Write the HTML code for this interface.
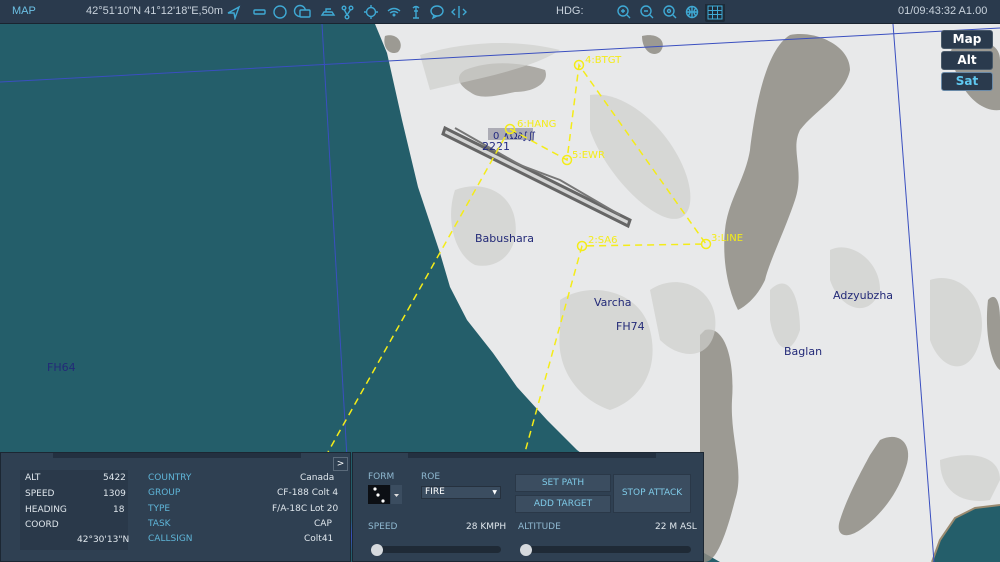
<!DOCTYPE html>
<html><head><meta charset="utf-8"><style>
*{margin:0;padding:0;box-sizing:border-box}
body{width:1000px;height:562px;overflow:hidden;background:#245e6a;font-family:"DejaVu Sans","Liberation Sans",sans-serif;position:relative}
#top{position:absolute;left:0;top:0;width:1000px;height:24px;background:#2a3a4d;border-bottom:1px solid #1a2430;color:#c8d2dc;font-size:11px;font-family:"Liberation Sans",sans-serif}
#top span{position:absolute;top:5px;white-space:nowrap}
.ic{position:absolute;top:4px}
#map{position:absolute;left:0;top:24px}
.mb{position:absolute;left:941px;width:52px;height:19px;background:#2a3a4d;border:1px solid #4a5a6a;border-radius:3px;color:#fff;font-weight:bold;font-size:12px;text-align:center;line-height:17px}
.panel{position:absolute;top:452px;height:110px;background:#2f4052;border:1px solid #1c2733}
.lbl{position:absolute;font-size:9px;color:#5fb5d8}
.w{position:absolute;font-size:9px;color:#dfe6ec}
.btn{position:absolute;background:#3b4d60;color:#7fcbe8;font-size:9px;text-align:center;border:1px solid #2a3848}
</style></head><body>
<svg id="map" width="1000" height="538" viewBox="0 24 1000 538">
<rect x="0" y="24" width="1000" height="538" fill="#245e6a"/>
<path d="M375,24 L1000,24 L1000,505 L975,508 L955,518 L940,540 L932,562 L720,562 L690,545 L650,510 L610,475 L577,450 L547,420 L517,387 L493,353 L467,320 L450,287 L440,253 L418,187 L402,120 L387,53 Z" fill="#e8e9ea"/>
<path d="M932,562 L940,540 L955,518 L975,508 L1000,505" fill="none" stroke="#9a8a70" stroke-width="2"/>
<g fill="#8e8c84" opacity="0.85">
<path d="M790,35 C815,30 850,45 850,70 C845,95 815,110 800,130 C790,150 805,170 795,200 C785,230 770,260 765,280 C758,295 748,305 738,310 C728,290 722,260 725,230 C728,200 745,180 750,150 C755,110 765,50 790,35 Z"/>
<path d="M705,330 C725,325 735,360 732,400 C730,440 745,470 735,500 C725,540 715,562 705,562 L700,562 L700,335 Z"/>
<path d="M880,440 C900,430 915,445 905,470 C895,500 875,520 860,530 C845,540 835,535 840,520 C848,495 862,470 870,455 Z"/>
<path d="M955,45 C975,38 1000,40 1000,60 L1000,110 C985,112 970,100 962,85 C955,70 945,52 955,45 Z"/>
<path d="M988,300 C995,292 1000,300 1000,320 L1000,370 C992,365 984,335 988,300 Z"/>
<path d="M465,70 C490,60 520,62 545,70 C550,82 535,92 515,92 C495,96 480,100 470,92 C458,85 455,76 465,70 Z" opacity="0.8"/>
<path d="M385,36 C398,32 405,45 398,52 C390,56 382,48 385,36 Z"/>
<path d="M642,36 C658,32 668,42 660,52 C652,58 642,50 642,36 Z"/>
</g>
<g fill="#cfcfcc" opacity="0.7">
<path d="M590,95 C620,90 660,120 680,160 C700,200 690,230 660,215 C630,200 600,160 590,130 Z"/>
<path d="M455,190 C480,180 510,190 515,220 C520,250 500,270 475,265 C455,255 445,220 455,190 Z"/>
<path d="M560,300 C590,280 640,290 650,330 C660,370 640,400 610,410 C580,400 555,370 560,330 Z"/>
<path d="M650,290 C680,270 720,290 715,330 C710,360 680,360 660,340 Z"/>
<path d="M770,290 C790,270 800,300 800,330 C790,360 775,350 770,320 Z"/>
<path d="M830,250 C850,240 880,260 880,290 C870,320 840,310 830,280 Z"/>
<path d="M930,280 C960,270 990,300 980,340 C970,380 940,370 930,340 Z"/>
<path d="M940,460 C970,450 1000,455 1000,480 L990,500 C960,505 940,490 940,460 Z"/>
<path d="M420,55 C470,40 520,40 560,50 C530,70 470,80 430,90 Z"/>
</g>
<path d="M445,128 L630,220 L628,226 L443,134 Z" fill="#d5d6d6" stroke="#666" stroke-width="3"/>
<path d="M455,128 L520,165 L560,180 L620,215" stroke="#777" stroke-width="2" fill="none"/>
<rect x="488" y="128" width="45" height="12" fill="#707080" opacity="0.5"/>
<text x="493" y="139" font-size="10" fill="#222a80" font-family="DejaVu Sans">0 ∧Ω∂∫∬</text>
<text x="482" y="150" font-size="11" fill="#222a80" font-family="DejaVu Sans">2221</text>
<line x1="0" y1="82" x2="1000" y2="28" stroke="#3a4fc0" stroke-width="1"/>
<line x1="322" y1="24" x2="353" y2="562" stroke="#3a4fc0" stroke-width="1"/>
<line x1="893" y1="24" x2="934" y2="562" stroke="#3a4fc0" stroke-width="1"/>
<g stroke="#f4ec18" stroke-width="1.5" fill="none" stroke-dasharray="7,5">
<path d="M510,129 L567,160 L579,65 L706,244 L582,246 L525,452"/>
<path d="M505,137 L328,452"/>
</g>
<g stroke="#f4ec18" stroke-width="1.5" fill="none">
<circle cx="510" cy="129" r="4.5"/><circle cx="567" cy="160" r="4.5"/><circle cx="579" cy="65" r="4.5"/><circle cx="706" cy="244" r="4.5"/><circle cx="582" cy="246" r="4.5"/>
</g>
<g fill="#f4ec18" font-size="10" font-family="DejaVu Sans">
<text x="517" y="127">6:HANG</text><text x="572" y="158">5:EWR</text><text x="585" y="63">4:BTGT</text><text x="711" y="241">3:LINE</text><text x="588" y="243">2:SA6</text>
</g>
<g fill="#232a78" font-size="11" font-family="DejaVu Sans">
<text x="475" y="242">Babushara</text><text x="594" y="306">Varcha</text><text x="616" y="330">FH74</text><text x="833" y="299">Adzyubzha</text><text x="784" y="355">Baglan</text><text x="47" y="371">FH64</text>
</g>
</svg>
<div id="top">
<span style="left:12px;color:#6cc0e4">MAP</span>
<span style="left:86px">42°51'10"N 41°12'18"E,50m</span>
<svg class="ic" style="left:226px" width="250" height="16" fill="none" stroke="#3fa9d4" stroke-width="1.4">
<path d="M2,9 L13,3 L9,14 L8,9 Z"/>
<rect x="28" y="6" width="11" height="4" rx="1"/>
<circle cx="54" cy="8" r="6"/>
<circle cx="74" cy="7" r="5.5"/><rect x="74" y="6" width="10" height="7" rx="1" fill="#2a3a4d"/>
<path d="M96,11 L108,11 L106,8 L98,8 Z M100,8 L100,5 L105,5"/>
<circle cx="118" cy="4" r="1.8"/><circle cx="125" cy="4" r="1.8"/><circle cx="121" cy="13" r="1.8"/><path d="M118,5 L121,11 M125,5 L121,11"/>
<circle cx="145" cy="8" r="4.5"/><path d="M145,1 V4 M145,12 V15 M138,8 H141 M149,8 H152"/>
<path d="M162,7 Q168,2 174,7 M164,9 Q168,6 172,9"/><circle cx="168" cy="11" r="0.8"/>
<path d="M190,3 V14 M187,14 H193 M187,4 Q190,1 193,4 M188,7 H192"/>
<ellipse cx="211" cy="7" rx="6" ry="5"/><path d="M208,11 L207,14 L211,12"/>
<path d="M233,2 V14 M229,5 L226,8 L229,11 M237,5 L240,8 L237,11"/>
</svg>
<span style="left:556px">HDG:</span>
<svg class="ic" style="left:616px" width="110" height="18" fill="none" stroke="#3fa9d4" stroke-width="1.4">
<circle cx="7" cy="7" r="5"/><path d="M11,11 L14,14 M5,7 H9 M7,5 V9"/>
<circle cx="30" cy="7" r="5"/><path d="M34,11 L37,14 M28,7 H32"/>
<circle cx="53" cy="7" r="5"/><path d="M57,11 L60,14"/><circle cx="53" cy="7" r="1.5"/>
<circle cx="76" cy="8" r="5.5"/><path d="M70.5,8 H81.5 M76,2.5 V13.5 M72,4 Q76,8 72,12 M80,4 Q76,8 80,12"/>
<rect x="89" y="-1" width="20" height="19" rx="2" fill="#1e2b38" stroke="none"/>
<path d="M92,2 H106 V15 H92 Z M96.5,2 V15 M101.5,2 V15 M92,6.5 H106 M92,10.5 H106" stroke-width="1"/>
</svg>
<span style="left:898px">01/09:43:32 A1.00</span>
</div>
<div class="mb" style="top:30px">Map</div>
<div class="mb" style="top:51px">Alt</div>
<div class="mb" style="top:72px;color:#5fc8f0;border-color:#6a8aa8">Sat</div>

<div class="panel" style="left:0;width:351px">
<div style="position:absolute;left:52px;top:0;width:248px;height:5px;background:#233040"></div>
<div style="position:absolute;left:332px;top:4px;width:15px;height:14px;border:1px solid #5a6a7a;color:#fff;font-size:9px;text-align:center;line-height:12px">&gt;</div>
<div style="position:absolute;left:19px;top:17px;width:108px;height:80px;background:#2a394a"></div>
<div class="w" style="left:24px;top:20px">ALT</div><div class="w" style="left:102px;top:20px">5422</div>
<div class="w" style="left:24px;top:36px">SPEED</div><div class="w" style="left:102px;top:36px">1309</div>
<div class="w" style="left:24px;top:52px">HEADING</div><div class="w" style="left:112px;top:52px">18</div>
<div class="w" style="left:24px;top:67px">COORD</div>
<div class="w" style="left:76px;top:82px">42°30'13"N</div>
<div class="lbl" style="left:147px;top:20px">COUNTRY</div><div class="w" style="left:299px;top:20px">Canada</div>
<div class="lbl" style="left:147px;top:35px">GROUP</div><div class="w" style="left:276px;top:35px">CF-188 Colt 4</div>
<div class="lbl" style="left:147px;top:51px">TYPE</div><div class="w" style="left:271px;top:51px">F/A-18C Lot 20</div>
<div class="lbl" style="left:147px;top:66px">TASK</div><div class="w" style="left:313px;top:66px">CAP</div>
<div class="lbl" style="left:147px;top:81px">CALLSIGN</div><div class="w" style="left:303px;top:81px">Colt41</div>
</div>

<div class="panel" style="left:352px;width:352px">
<div style="position:absolute;left:55px;top:0;width:248px;height:5px;background:#233040"></div>
<div class="lbl" style="left:15px;top:19px;color:#8fb8d0">FORM</div>
<div class="lbl" style="left:68px;top:19px;color:#8fb8d0">ROE</div>
<div style="position:absolute;left:15px;top:32px;width:22px;height:19px;background:#0c0f14"></div>
<svg style="position:absolute;left:15px;top:32px" width="35" height="20"><circle cx="7" cy="4" r="1.6" fill="#fff"/><circle cx="10" cy="10" r="1.6" fill="#fff"/><circle cx="15" cy="16" r="1.6" fill="#fff"/><rect x="23" y="0" width="11" height="19" fill="#3b4d60"/><path d="M26,9 L31,9 L28.5,12Z" fill="#ddd"/></svg>
<div style="position:absolute;left:68px;top:33px;width:80px;height:13px;background:#3b4d60;border:1px solid #26313e;color:#fff;font-size:9px;padding-left:3px;line-height:11px">FIRE<span style="position:absolute;right:3px;font-size:6px">▼</span></div>
<div class="btn" style="left:162px;top:21px;width:96px;height:18px;line-height:16px">SET PATH</div>
<div class="btn" style="left:162px;top:42px;width:96px;height:18px;line-height:16px">ADD TARGET</div>
<div class="btn" style="left:260px;top:21px;width:78px;height:39px;line-height:37px">STOP ATTACK</div>
<div class="lbl" style="left:15px;top:69px;color:#8fb8d0">SPEED</div><div class="w" style="left:113px;top:69px">28 KMPH</div>
<div class="lbl" style="left:165px;top:69px;color:#8fb8d0">ALTITUDE</div><div class="w" style="left:302px;top:69px">22 M ASL</div>
<div style="position:absolute;left:20px;top:93px;width:128px;height:7px;border-radius:4px;background:#1f2a36"></div>
<div style="position:absolute;left:170px;top:93px;width:168px;height:7px;border-radius:4px;background:#1f2a36"></div>
<div style="position:absolute;left:18px;top:91px;width:12px;height:12px;border-radius:6px;background:#d6dade"></div>
<div style="position:absolute;left:167px;top:91px;width:12px;height:12px;border-radius:6px;background:#d6dade"></div>
</div>
</body></html>
